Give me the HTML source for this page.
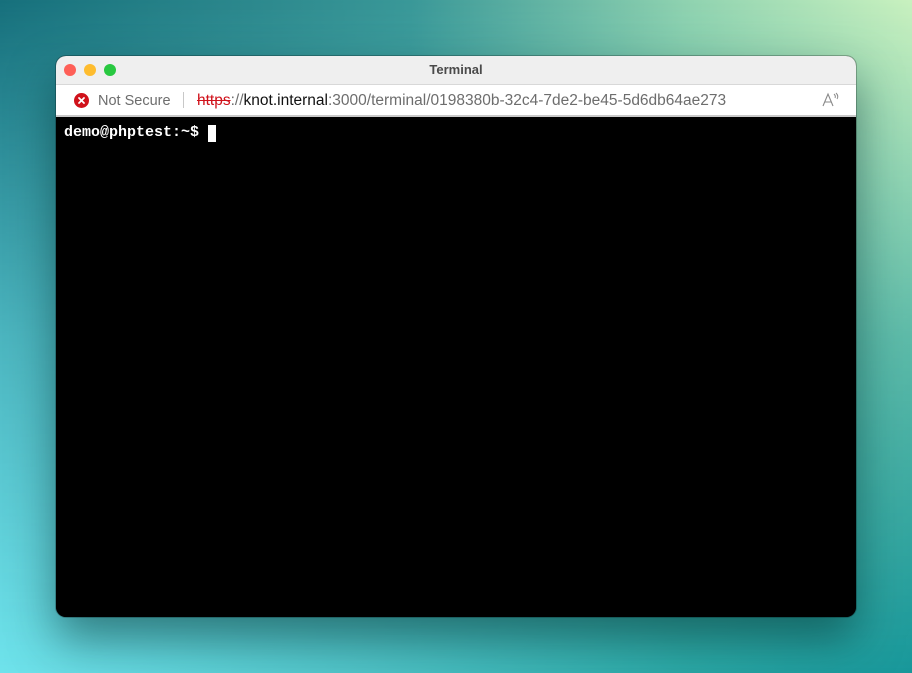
<!DOCTYPE html>
<html><head><style>
html,body{margin:0;padding:0}
body{width:912px;height:673px;overflow:hidden;position:relative;
background:linear-gradient(90deg,#17707c 0%,#3a9898 45%,#8fd2b0 75%,#c9f1bf 100%);
font-family:"Liberation Sans",sans-serif}
body:before{content:"";position:absolute;inset:0;
background:linear-gradient(90deg,#6fe3ec 0%,#50c4c8 40%,#2aa8a6 75%,#17979a 100%);
-webkit-mask-image:linear-gradient(180deg,rgba(0,0,0,0) 0%,rgba(0,0,0,0.6) 50%,#000 100%);
mask-image:linear-gradient(180deg,rgba(0,0,0,0) 0%,rgba(0,0,0,0.6) 50%,#000 100%)}
.win{position:absolute;left:56px;top:56px;width:800px;height:561px;border-radius:10px;overflow:hidden;background:#000;
box-shadow:0 22px 45px rgba(0,40,40,0.5),0 0 0 1px rgba(0,0,0,0.25)}
.title{height:28px;background:#efefef;position:relative;border-bottom:1px solid #d8d8d8}
.title .t{position:absolute;width:100%;text-align:center;top:6px;font-size:13px;font-weight:bold;color:#4a4a4a}
.dot{position:absolute;top:8px;width:12px;height:12px;border-radius:50%}
.addr{height:30px;background:#fff;position:relative;border-bottom:2px solid #c9c9c9;font-size:14.5px;color:#6d6d6d}
.addr span{position:absolute;top:7px}
.term{position:absolute;top:61px;left:0;right:0;bottom:0;background:#000}
.p{position:absolute;left:8px;top:7px;font-family:"Liberation Mono",monospace;font-size:15px;color:#fff;font-weight:bold;white-space:pre}
.cur{position:absolute;left:152px;top:8px;width:8px;height:17px;background:#fff}
</style></head><body>
<div class="win">
<div class="title">
<div class="dot" style="left:8px;background:#fe5f57"></div>
<div class="dot" style="left:28px;background:#febc2e"></div>
<div class="dot" style="left:48px;background:#28c840"></div>
<div class="t">Terminal</div>
</div>
<div class="addr">
<svg style="position:absolute;left:18px;top:8px" width="15" height="15" viewBox="0 0 15 15"><circle cx="7.5" cy="7.5" r="7.5" fill="#d0121b"/><path d="M5 5L10 10M10 5L5 10" stroke="#fff" stroke-width="1.8" stroke-linecap="round"/></svg>
<span style="left:42px;top:8px">Not Secure</span>
<div style="position:absolute;left:127px;top:7px;width:1px;height:16px;background:#c8c8c8"></div>
<span style="left:141px;top:7px;font-size:15.5px"><s style="color:#d0121b;text-decoration-color:#d0121b">https</s>://<span style="position:static;color:#111">knot.internal</span>:3000/terminal/0198380b-32c4-7de2-be45-5d6db64ae273</span>
<svg style="position:absolute;left:766px;top:7px" width="18" height="16" viewBox="0 0 18 16"><path d="M1 14L6 2L11 14M3 10H9" stroke="#888" stroke-width="1.1" fill="none"/><path d="M12 2Q14 4 13 6M14 1Q17 4 15 7" stroke="#888" stroke-width="1" fill="none"/></svg>
</div>
<div class="term"><div class="p">demo@phptest:~$ </div><div class="cur"></div></div>
</div>
</body></html>
